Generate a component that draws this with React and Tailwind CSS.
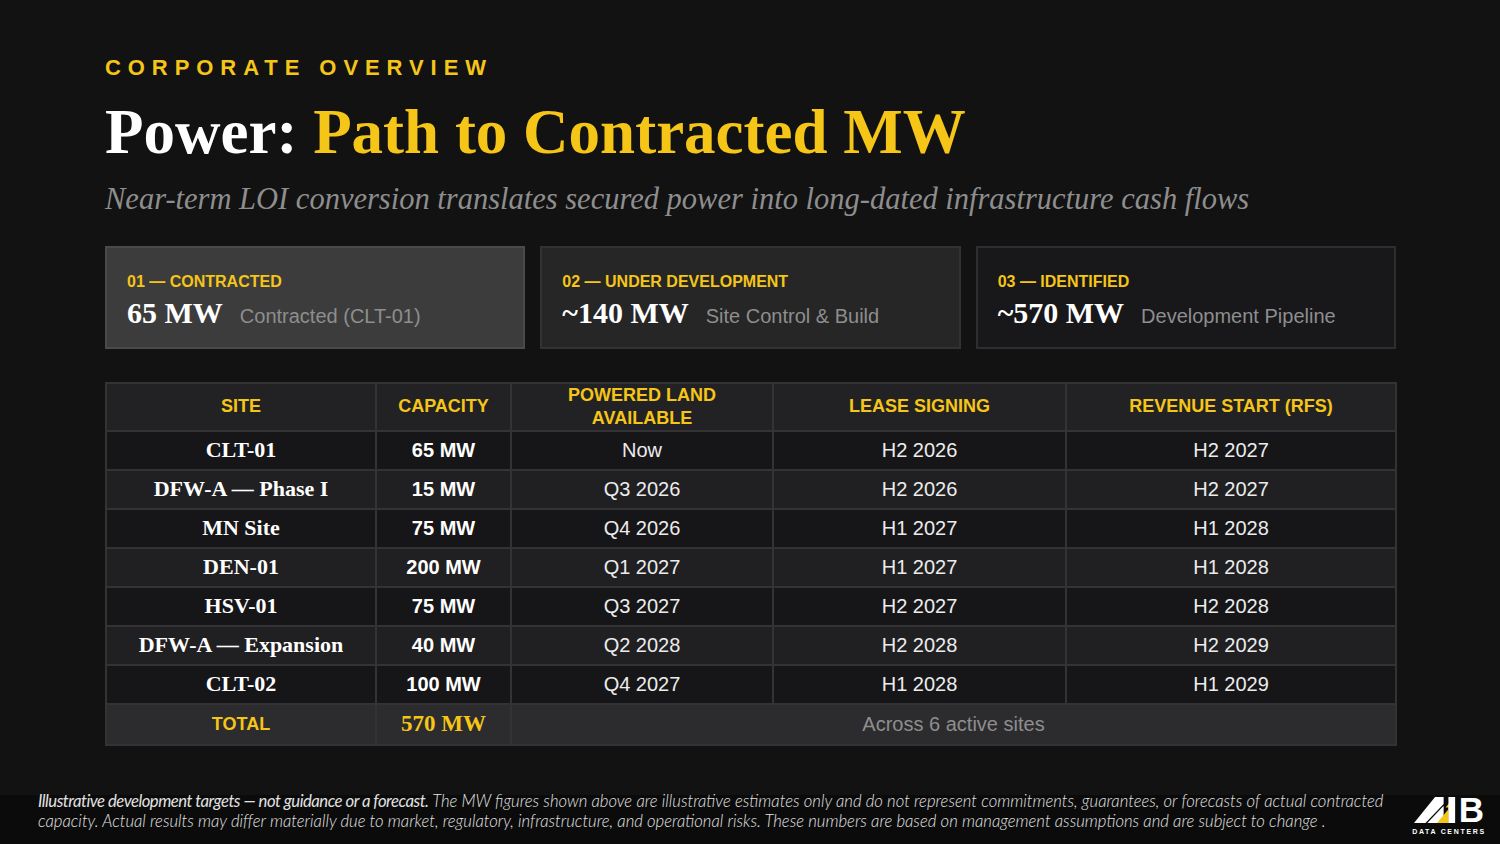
import React from 'react';

const rows = [
  { site: 'CLT-01', cap: '65 MW', land: 'Now', lease: 'H2 2026', rfs: 'H2 2027' },
  { site: 'DFW-A — Phase I', cap: '15 MW', land: 'Q3 2026', lease: 'H2 2026', rfs: 'H2 2027' },
  { site: 'MN Site', cap: '75 MW', land: 'Q4 2026', lease: 'H1 2027', rfs: 'H1 2028' },
  { site: 'DEN-01', cap: '200 MW', land: 'Q1 2027', lease: 'H1 2027', rfs: 'H1 2028' },
  { site: 'HSV-01', cap: '75 MW', land: 'Q3 2027', lease: 'H2 2027', rfs: 'H2 2028' },
  { site: 'DFW-A — Expansion', cap: '40 MW', land: 'Q2 2028', lease: 'H2 2028', rfs: 'H2 2029' },
  { site: 'CLT-02', cap: '100 MW', land: 'Q4 2027', lease: 'H1 2028', rfs: 'H1 2029' },
];

const stages = [
  { label: '01 — CONTRACTED', value: '65 MW', desc: 'Contracted (CLT-01)', box: 'bg-[#3c3c3c] border-[#4a4a4a]' },
  { label: '02 — UNDER DEVELOPMENT', value: '~140 MW', desc: 'Site Control & Build', box: 'bg-[#262626] border-[#323232]' },
  { label: '03 — IDENTIFIED', value: '~570 MW', desc: 'Development Pipeline', box: 'bg-[#18181a] border-[#2e2e30]' },
];

const serif = "font-['Liberation_Serif','DejaVu_Serif',serif]";
const sans = "font-['Liberation_Sans',Arial,sans-serif]";

function Logo() {
  return (
    <div className="flex flex-col items-center w-[74px]">
      <div className="flex items-end h-[26px]">
        <svg width="44" height="26" viewBox="0 0 46 30" preserveAspectRatio="none">
          {/* stylized A mark */}
          <polygon points="0,30 22,0 31,0 31,8 12,30" fill="#ffffff" />
          <polygon points="14,30 31,10 31,30" fill="#ffffff" />
          <polygon points="24,30 36,14 36,30" fill="#f5c518" />
          <polygon points="33,12 42,0 42,30 36,30 36,12" fill="#f5c518" />
          <rect x="36" y="0" width="7" height="30" fill="#ffffff" />
        </svg>
        <span className={`${sans} text-white font-bold text-[35px] leading-[26px] ml-[1px]`}>B</span>
      </div>
      <div className={`${sans} text-white font-bold text-[7px] tracking-[0.24em] mt-[5px] leading-none`}>DATA CENTERS</div>
    </div>
  );
}

export default function App() {
  return (
    <div className="w-[1500px] h-[844px] bg-[#121212] flex flex-col overflow-hidden">
      {/* Header */}
      <div className="pl-[105px] pt-[57px] flex-1">
        <div className={`${sans} text-[#f5c518] font-bold text-[22px] tracking-[0.315em] leading-none`}>
          CORPORATE OVERVIEW
        </div>
        <h1 className={`${serif} font-bold text-[63px] leading-none mt-[22px] text-white`}>
          Power: <span className="text-[#f5c518]">Path to Contracted MW</span>
        </h1>
        <p className={`${serif} italic text-[30.5px] text-[#8e8e8e] leading-none mt-[20px]`}>
          Near-term LOI conversion translates secured power into long-dated infrastructure cash flows
        </p>

        {/* Stage cards */}
        <div className="flex gap-[15px] mt-[31px] w-[1291px]">
          {stages.map((s) => (
            <div key={s.label} className={`flex-1 h-[103px] border-2 ${s.box} pl-[20px] pt-[26px]`}>
              <div className={`${sans} text-[#f5c518] font-bold text-[16px] leading-none`}>{s.label}</div>
              <div className="flex items-baseline mt-[8px]">
                <span className={`${serif} text-white font-bold text-[30px] leading-none`}>{s.value}</span>
                <span className={`${sans} text-[#8e8e8e] text-[20px] ml-[17px] leading-none`}>{s.desc}</span>
              </div>
            </div>
          ))}
        </div>

        {/* Table */}
        <table className="mt-[33px] w-[1290px] border-collapse table-fixed">
          <colgroup>
            <col className="w-[270px]" />
            <col className="w-[135px]" />
            <col className="w-[262px]" />
            <col className="w-[293px]" />
            <col className="w-[330px]" />
          </colgroup>
          <thead>
            <tr className="bg-[#222224] h-[48px]">
              {['SITE', 'CAPACITY', 'POWERED LAND AVAILABLE', 'LEASE SIGNING', 'REVENUE START (RFS)'].map((h, i) => (
                <th
                  key={h}
                  className={`${sans} border-2 border-[#333336] text-[#f5c518] font-bold text-[18px] leading-[23px] text-center ${i === 2 ? 'px-[50px]' : ''}`}
                >
                  {h}
                </th>
              ))}
            </tr>
          </thead>
          <tbody>
            {rows.map((r, i) => (
              <tr key={r.site} className={`h-[39px] ${i % 2 === 0 ? 'bg-[#161618]' : 'bg-[#202022]'}`}>
                <td className={`${serif} border-2 border-[#333336] text-white font-bold text-[22px] text-center leading-none`}>{r.site}</td>
                <td className={`${sans} border-2 border-[#333336] text-white font-bold text-[20px] text-center leading-none`}>{r.cap}</td>
                <td className={`${sans} border-2 border-[#333336] text-[#ececec] text-[20px] text-center leading-none`}>{r.land}</td>
                <td className={`${sans} border-2 border-[#333336] text-[#ececec] text-[20px] text-center leading-none`}>{r.lease}</td>
                <td className={`${sans} border-2 border-[#333336] text-[#ececec] text-[20px] text-center leading-none`}>{r.rfs}</td>
              </tr>
            ))}
            <tr className="h-[41px] bg-[#2c2c2e]">
              <td className={`${sans} border-2 border-[#333336] text-[#f5c518] font-bold text-[18px] text-center`}>TOTAL</td>
              <td className={`${serif} border-2 border-[#333336] text-[#f5c518] font-bold text-[23px] text-center`}>570 MW</td>
              <td colSpan={3} className={`${sans} border-2 border-[#333336] text-[#8e8e8e] text-[20px] text-center`}>
                Across 6 active sites
              </td>
            </tr>
          </tbody>
        </table>
      </div>

      {/* Footer disclaimer */}
      <div className="h-[49px] bg-[#0b0b0b] flex items-start pl-[38px] pr-[14px]">
        <div className="font-['Lato',sans-serif] italic font-light text-[16.7px] leading-[20px] text-[#e2e2e2] flex-1 -mt-[4px]">
          <div className="whitespace-nowrap">
            <span className="font-normal tracking-[-0.03em]">Illustrative development targets — not guidance or a forecast.</span>{' '}
            The MW figures shown above are illustrative estimates only and do not represent commitments, guarantees, or forecasts of actual contracted
          </div>
          <div className="whitespace-nowrap">
            capacity. Actual results may differ materially due to market, regulatory, infrastructure, and operational risks. These numbers are based on management assumptions and are subject to change .
          </div>
        </div>
        <div className="mt-[2px]">
          <Logo />
        </div>
      </div>
    </div>
  );
}
